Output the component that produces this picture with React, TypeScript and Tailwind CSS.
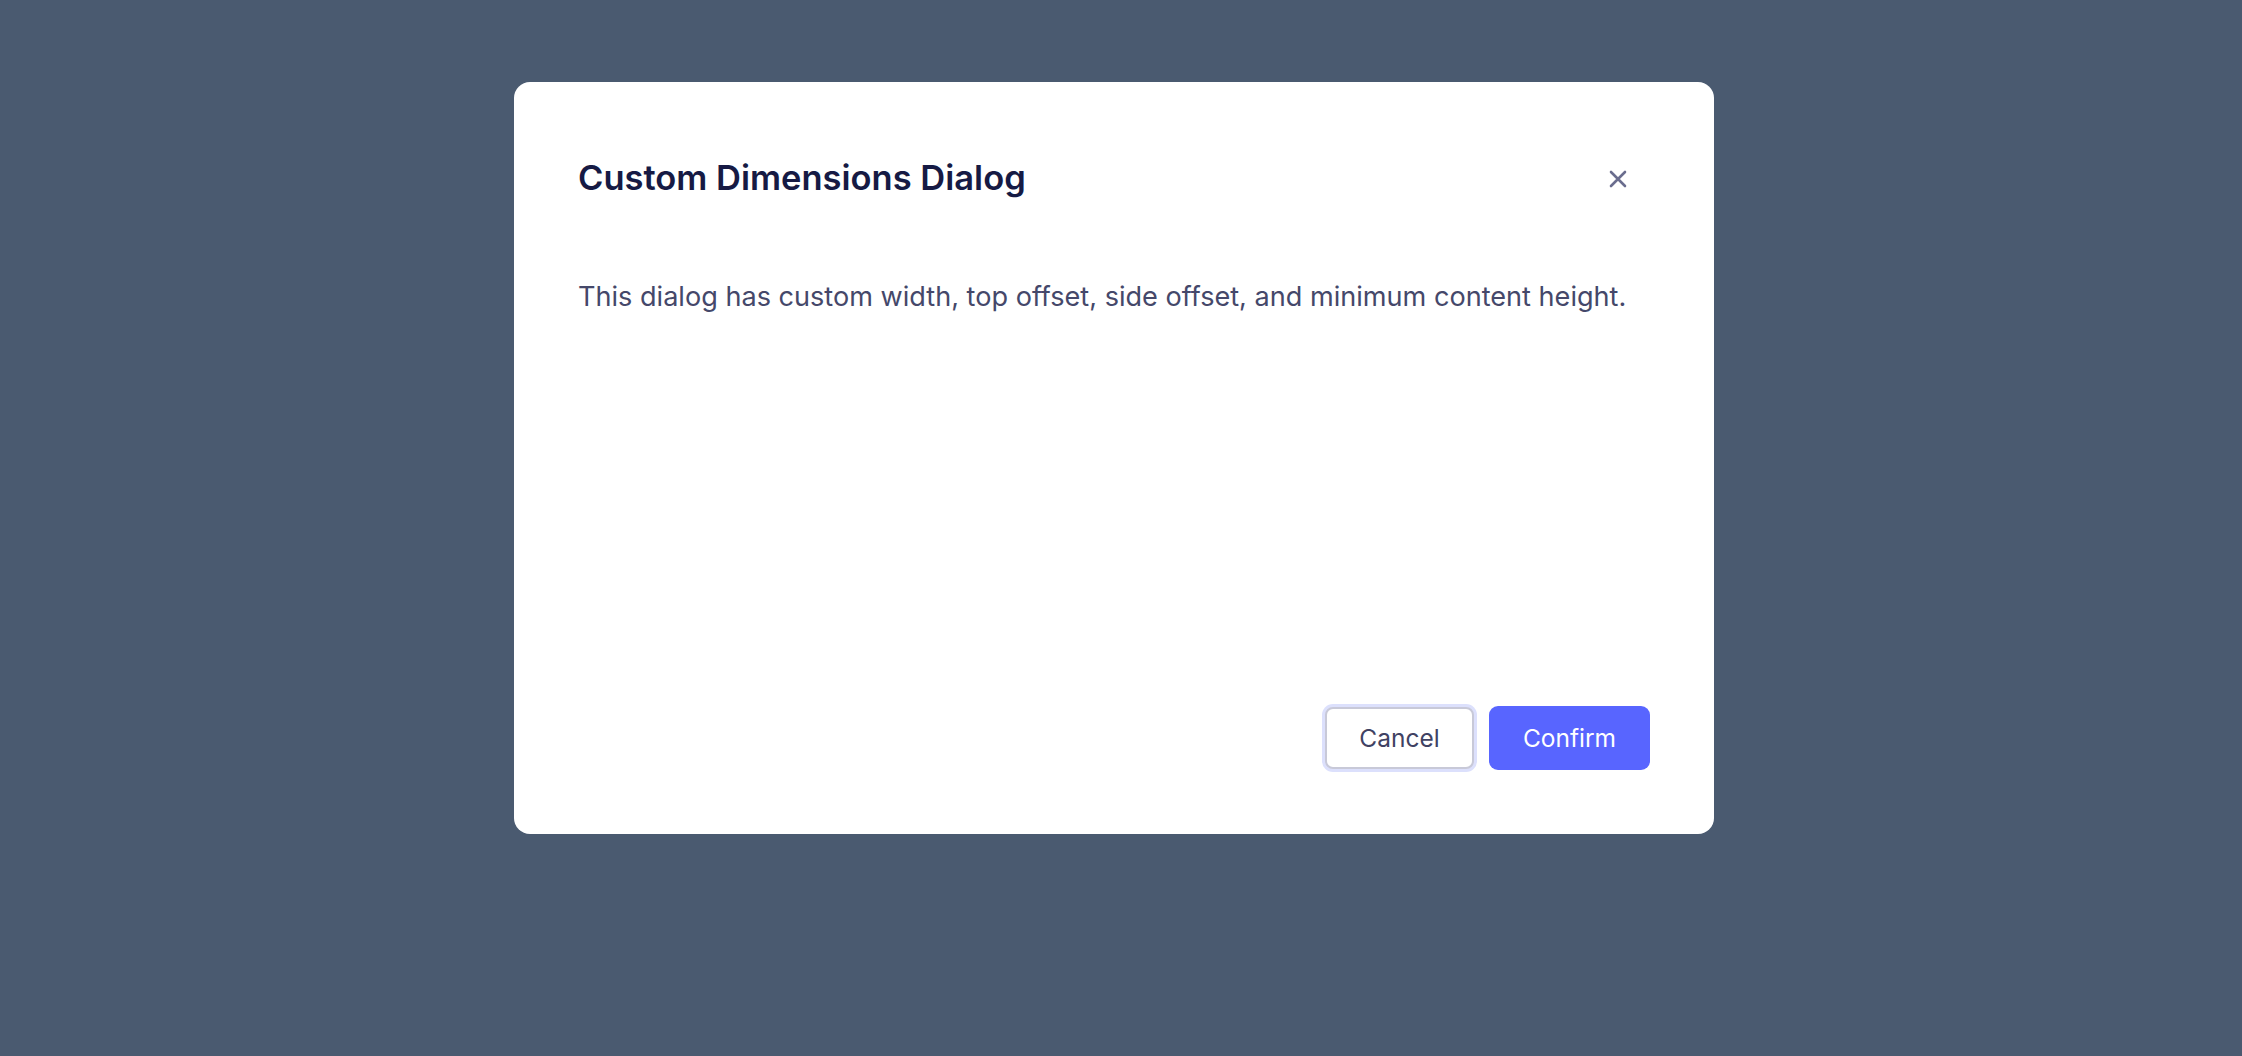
import { useState } from "react";

function CloseIcon() {
  return (
    <svg width="18" height="18" viewBox="0 0 18 18" fill="none">
      <path d="M2 2L16 16M16 2L2 16" stroke="#6a6d8e" strokeWidth="2.6" strokeLinecap="round" />
    </svg>
  );
}

export default function App() {
  const [open, setOpen] = useState(true);

  return (
    <div
      className="w-full h-[1056px] bg-[#4a5a70] overflow-hidden"
      style={{ fontFamily: "Inter, 'Noto Sans', sans-serif" }}
    >
      {open && (
        <div className="ml-[514px] mt-[82px] w-[1200px] h-[752px] bg-white rounded-[16px] flex flex-col px-16 pt-[74px] pb-16">
          <div className="flex flex-row items-center justify-between h-[44px]">
            <h2 className="text-[34.5px] leading-[44px] font-semibold text-[#161a44]">
              Custom Dimensions Dialog
            </h2>
            <button
              className="mr-[23px] mt-[1px] flex items-center justify-center"
              onClick={() => setOpen(false)}
              aria-label="Close"
            >
              <CloseIcon />
            </button>
          </div>
          <p className="mt-[77px] text-[27.1px] leading-[40px] text-[#45486a]">
            This dialog has custom width, top offset, side offset, and minimum content height.
          </p>
          <div className="mt-auto flex flex-row justify-end gap-[15px]">
            <button className="w-[149px] h-[62px] mt-[1px] rounded-[8px] border-2 border-[#c8c9d8] ring-[3px] ring-[#dce0fc] bg-white text-[24.5px] text-[#3f4263]">
              Cancel
            </button>
            <button className="w-[161px] h-[64px] rounded-[9px] bg-[#5865ff] text-[24.5px] text-white">
              Confirm
            </button>
          </div>
        </div>
      )}
    </div>
  );
}
